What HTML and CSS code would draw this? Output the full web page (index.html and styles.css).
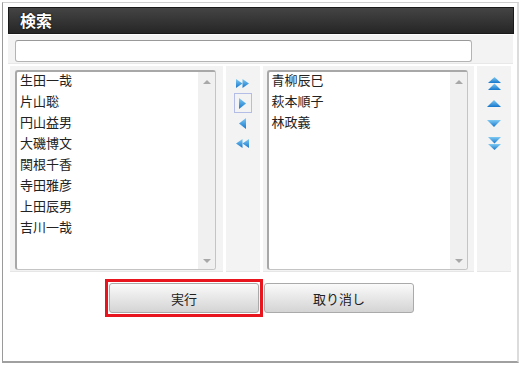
FILE: index.html
```html
<!DOCTYPE html>
<html lang="ja">
<head>
    <meta charset="UTF-8">
    <title>検索</title>
    <link rel="stylesheet" href="styles.css">
</head>
<body>
    <svg class="defs" width="0" height="0">
        <defs>
            <linearGradient id="blue" x1="0" y1="0" x2="0" y2="1">
                <stop offset="0" stop-color="#7fcaf3"/>
                <stop offset="1" stop-color="#1777cc"/>
            </linearGradient>
        </defs>
    </svg>

    <div class="window">
        <div class="titlebar">検索</div>

        <div class="search-row">
            <input type="text" class="search">
        </div>

        <div class="picker">
            <div class="cell list-cell">
                <div class="listbox">
                    <ul class="items">
                        <li>生田一哉</li>
                        <li>片山聡</li>
                        <li>円山益男</li>
                        <li>大磯博文</li>
                        <li>関根千香</li>
                        <li>寺田雅彦</li>
                        <li>上田辰男</li>
                        <li>吉川一哉</li>
                    </ul>
                    <div class="scrollbar">
                        <span class="scroll-up"></span>
                        <span class="scroll-down"></span>
                    </div>
                </div>
            </div>

            <div class="cell tool-cell">
                <div class="tool"><svg width="13" height="9" viewBox="0 0 13 9"><polygon points="0,0 6.5,4.5 0,9" fill="url(#blue)"/><polygon points="6.5,0 13,4.5 6.5,9" fill="url(#blue)"/></svg></div>
                <div class="tool focused"><svg width="7" height="11" viewBox="0 0 7 11"><polygon points="0,0 7,5.5 0,11" fill="url(#blue)"/></svg></div>
                <div class="tool"><svg width="7" height="11" viewBox="0 0 7 11"><polygon points="7,0 0,5.5 7,11" fill="url(#blue)"/></svg></div>
                <div class="tool"><svg width="13" height="9" viewBox="0 0 13 9"><polygon points="6.5,0 0,4.5 6.5,9" fill="url(#blue)"/><polygon points="13,0 6.5,4.5 13,9" fill="url(#blue)"/></svg></div>
            </div>

            <div class="cell list-cell">
                <div class="listbox">
                    <ul class="items">
                        <li>青柳辰巳</li>
                        <li>萩本順子</li>
                        <li>林政義</li>
                    </ul>
                    <div class="scrollbar">
                        <span class="scroll-up"></span>
                        <span class="scroll-down"></span>
                    </div>
                </div>
            </div>

            <div class="cell tool-cell">
                <div class="tool"><svg width="13" height="13" viewBox="0 0 13 13"><polygon points="0,6 6.5,0 13,6" fill="url(#blue)"/><polygon points="0,13 6.5,6.5 13,13" fill="url(#blue)"/></svg></div>
                <div class="tool"><svg width="14" height="7" viewBox="0 0 14 7"><polygon points="0,7 7,0 14,7" fill="url(#blue)"/></svg></div>
                <div class="tool"><svg width="14" height="7" viewBox="0 0 14 7"><polygon points="0,0 14,0 7,7" fill="url(#blue)"/></svg></div>
                <div class="tool"><svg width="13" height="13" viewBox="0 0 13 13"><polygon points="0,0 13,0 6.5,6.5" fill="url(#blue)"/><polygon points="0,7 13,7 6.5,13" fill="url(#blue)"/></svg></div>
            </div>
        </div>

        <div class="actions">
            <div class="highlight">
                <button class="btn">実行</button>
            </div>
            <button class="btn">取り消し</button>
        </div>
    </div>
</body>
</html>
```

FILE: styles.css
```css
body {
    margin: 0;
    background-color: #fff;
    font-family: "Noto Sans CJK JP", "Noto Sans", sans-serif;
    color: #222;
}

.defs {
    position: absolute;
}

.window {
    box-sizing: border-box;
    width: 517px;
    height: 361px;
    margin: 2px 0 0 2px;
    padding: 4px 4px 0 5px;
    background-color: #fff;
    border-top: 1px solid #cfcfcf;
    border-left: 1px solid #9a9a9a;
    border-right: 2px solid #dcdcdc;
    border-bottom: 2px solid #a0a0a0;
}

.titlebar {
    box-sizing: border-box;
    height: 27px;
    width: 506px;
    padding-left: 11px;
    line-height: 25px;
    color: #fff;
    font-size: 16px;
    font-weight: bold;
    background: linear-gradient(#444, #262626);
    border: 1px solid #1a1a1a;
    text-shadow: 0 0 2px #000;
}

.search-row {
    box-sizing: border-box;
    width: 505px;
    height: 29px;
    padding: 5px 0 0 7px;
    margin-top: 1px;
    background-color: #f3f3f3;
    border-bottom: 1px solid #e8e8e8;
}

.search {
    box-sizing: border-box;
    display: block;
    width: 457px;
    height: 22px;
    margin: 0;
    border: 1px solid #b4b4b4;
    border-top-color: #999;
    border-radius: 3px;
    background-color: #fff;
}

.picker {
    display: flex;
    gap: 3px;
    padding: 0 2px;
    margin-top: 2px;
    height: 206px;
}

.cell {
    box-sizing: border-box;
    background-color: #f3f3f3;
    border-bottom: 1px solid #e6e6e6;
}

.list-cell {
    width: 213px;
    padding: 4px 0 0 5px;
}

.list-cell + .tool-cell + .list-cell {
    width: 212px;
    padding-left: 4px;
}

.tool-cell {
    width: 34px;
    padding-top: 7px;
    display: flex;
    flex-direction: column;
    align-items: center;
}

.tool {
    box-sizing: border-box;
    width: 18px;
    height: 20px;
    display: flex;
    align-items: center;
    justify-content: center;
}

.tool.focused {
    border: 1px solid #b3bde6;
}

.tool svg {
    display: block;
}

.listbox {
    box-sizing: border-box;
    display: flex;
    width: 201px;
    height: 200px;
    background-color: #fff;
    border: 1px solid #c4c4c4;
    border-top: 2px solid #a8a8a8;
    border-left: 2px solid #a8a8a8;
    border-radius: 3px;
    overflow: hidden;
}

.items {
    flex: 1;
    margin: -3px 0 0;
    padding: 0 0 0 3px;
    list-style: none;
    font-size: 13px;
    line-height: 21px;
}

.scrollbar {
    position: relative;
    width: 17px;
    background-color: #f0f0f0;
}

.scroll-up,
.scroll-down {
    position: absolute;
    left: 5px;
    width: 0;
    height: 0;
    border-left: 4px solid transparent;
    border-right: 4px solid transparent;
}

.scroll-up {
    top: 8px;
    border-bottom: 4px solid #a8a8a8;
}

.scroll-down {
    bottom: 6px;
    border-top: 4px solid #a8a8a8;
}

.actions {
    display: flex;
    justify-content: center;
    align-items: center;
    gap: 1px;
    margin-top: 7px;
    padding-right: 2px;
}

.highlight {
    border: 3px solid #e8141e;
    padding: 1px;
}

.btn {
    box-sizing: border-box;
    display: block;
    width: 150px;
    height: 30px;
    margin: 0;
    font-family: "Noto Sans CJK JP", "Noto Sans", sans-serif;
    font-size: 13px;
    color: #222;
    background: linear-gradient(#fafafa, #d4d4d4);
    border: 1px solid #aaa;
    border-radius: 3px;
}
```
